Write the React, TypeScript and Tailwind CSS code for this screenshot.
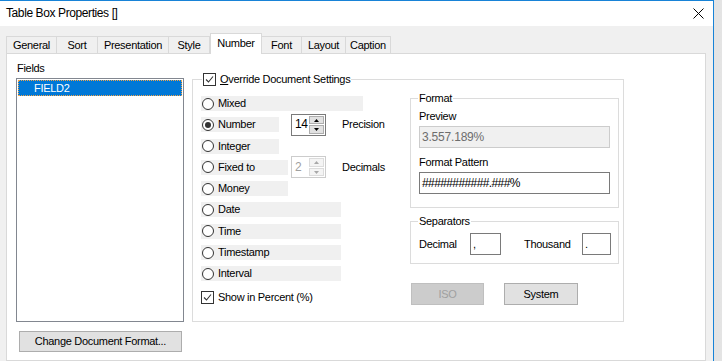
import React from "react";

const TABS = [
  { label: "General", w: "w-[51px]" },
  { label: "Sort", w: "w-[41px]" },
  { label: "Presentation", w: "w-[71px]" },
  { label: "Style", w: "w-[41px]" },
  { label: "Number", w: "w-[52px]", active: true },
  { label: "Font", w: "w-[40px]" },
  { label: "Layout", w: "w-[44px]" },
  { label: "Caption", w: "w-[45px]" },
];

function Radio({ checked }: { checked?: boolean }) {
  return (
    <span className="ml-[1px] w-[12px] h-[12px] rounded-full border border-[#333] bg-white flex items-center justify-center shrink-0">
      {checked && <span className="w-[6px] h-[6px] rounded-full bg-[#333]" />}
    </span>
  );
}

function Check() {
  return (
    <span className="w-[13px] h-[13px] border border-[#333] bg-white shrink-0 flex items-center justify-center">
      <svg width="11" height="11" viewBox="0 0 11 11">
        <path d="M2 5.5 L4.5 8 L9 2.5" fill="none" stroke="#333" strokeWidth="1.1" />
      </svg>
    </span>
  );
}

function Tri({ up, color }: { up?: boolean; color: string }) {
  return (
    <svg width="5" height="3" viewBox="0 0 5 3">
      <path d={up ? "M0 3 L2.5 0 L5 3Z" : "M0 0 L2.5 3 L5 0Z"} fill={color} />
    </svg>
  );
}

function Spin({ value, disabled }: { value: string; disabled?: boolean }) {
  const arrow = disabled ? "#a8a8a8" : "#000";
  return (
    <div
      className={`w-[35px] h-[22px] border bg-white flex items-stretch ${
        disabled ? "border-[#cccccc] text-[#a0a0a0]" : "border-[#7a7a7a] text-black"
      }`}
    >
      <span className="flex-1 pl-[3px] flex items-center text-[12px]">{value}</span>
      <div className="w-[16px] flex flex-col gap-[1px] py-[1px] pr-[1px]">
        <div
          className={`flex-1 border flex items-center justify-center ${
            disabled ? "border-[#dcdcdc] bg-[#f4f4f4]" : "border-[#adadad] bg-[#e1e1e1]"
          }`}
        >
          <Tri up color={arrow} />
        </div>
        <div
          className={`flex-1 border flex items-center justify-center ${
            disabled ? "border-[#dcdcdc] bg-[#f4f4f4]" : "border-[#adadad] bg-[#e1e1e1]"
          }`}
        >
          <Tri color={arrow} />
        </div>
      </div>
    </div>
  );
}

function RadioRow({
  label,
  w,
  checked,
  children,
}: {
  label: string;
  w: string;
  checked?: boolean;
  children?: React.ReactNode;
}) {
  return (
    <div className="h-[15px] flex items-center">
      <div className={`h-[15px] ${w} bg-[#f0f0f0] flex items-center shrink-0`}>
        <Radio checked={checked} />
        <span className="ml-[4px] whitespace-nowrap">{label}</span>
      </div>
      {children}
    </div>
  );
}

export default function App() {
  return (
    <div className="w-[722px] h-[361px] overflow-hidden bg-[linear-gradient(to_right,#c6c6c6,#e4e4e4)] font-['Liberation_Sans',Arial,sans-serif] text-[11px] tracking-[-0.3px] text-black leading-[13px]">
      <div className="w-[714px] h-[361px] border-t border-r border-[#1883d7] bg-[#f0f0f0] flex flex-col">
        {/* Title bar */}
        <div className="h-[25px] bg-white flex items-center justify-between pl-[6px] pr-[9px] shrink-0">
          <span className="text-[12px] tracking-[-0.4px]">Table Box Properties []</span>
          <svg width="11" height="11" viewBox="0 0 11 11">
            <path d="M0.5 0.5 L10.5 10.5 M10.5 0.5 L0.5 10.5" stroke="#000" strokeWidth="1" />
          </svg>
        </div>

        {/* Tabs */}
        <div className="px-[6px] pt-[7px] flex-1 flex flex-col">
          <div className="h-[20px] flex items-end relative z-10">
            {TABS.map((t, i) =>
              t.active ? (
                <div
                  key={t.label}
                  className={`${t.w} h-[21px] -mb-[1px] bg-white border border-b-0 border-[#d9d9d9] flex items-center justify-center pb-[2px]`}
                >
                  {t.label}
                </div>
              ) : (
                <div
                  key={t.label}
                  className={`${t.w} h-[17px] border-t border-r border-[#d9d9d9] ${
                    i === 0 ? "border-l" : ""
                  } flex items-center justify-center`}
                >
                  {t.label}
                </div>
              )
            )}
          </div>

          {/* Tab page */}
          <div className="w-[700px] flex-1 bg-white border border-[#d9d9d9] flex pl-[9px]">
            {/* Fields column */}
            <div className="w-[168px] pt-[8px] flex flex-col">
              <span className="ml-[1px]">Fields</span>
              <div className="mt-[3px] h-[244px] border border-[#828790] bg-white p-[1px]">
                <div className="h-[16px] bg-[#0078d7] border border-dotted border-[#f3a54a] text-white pl-[15px] flex items-center">
                  FIELD2
                </div>
              </div>
              <button className="mt-[9px] ml-[3px] w-[163px] h-[21px] bg-[#e1e1e1] border border-[#adadad] flex items-center justify-center">
                Change Document Format...
              </button>
            </div>

            {/* Override group */}
            <div className="ml-[8px] mt-[25px] w-[432px] h-[243px] border border-[#dcdcdc] relative flex">
              <div className="absolute -top-[7px] left-[9px] bg-white px-[1px] flex items-center gap-[4px]">
                <Check />
                <span>
                  <span className="underline">O</span>verride Document Settings
                </span>
              </div>

              {/* Radio list */}
              <div className="w-[217px] pl-[8px] pt-[16px] flex flex-col gap-[6.3px]">
                <RadioRow label="Mixed" w="w-[162px]" />
                <RadioRow label="Number" w="w-[78px]" checked>
                  <div className="ml-[12px]">
                    <Spin value="14" />
                  </div>
                  <span className="ml-[16px]">Precision</span>
                </RadioRow>
                <RadioRow label="Integer" w="w-[78px]" />
                <RadioRow label="Fixed to" w="w-[87px]">
                  <div className="ml-[3px]">
                    <Spin value="2" disabled />
                  </div>
                  <span className="ml-[16px]">Decimals</span>
                </RadioRow>
                <RadioRow label="Money" w="w-[87px]" />
                <RadioRow label="Date" w="w-[140px]" />
                <RadioRow label="Time" w="w-[140px]" />
                <RadioRow label="Timestamp" w="w-[140px]" />
                <RadioRow label="Interval" w="w-[140px]" />
                <div className="mt-[3px] flex items-center gap-[4px]">
                  <Check />
                  <span>Show in Percent (%)</span>
                </div>
              </div>

              {/* Right column */}
              <div className="w-[209px] pt-[18px] flex flex-col">
                <div className="h-[110px] border border-[#dcdcdc] relative pl-[8px] pt-[11px] flex flex-col">
                  <span className="absolute -top-[7px] left-[7px] bg-white px-[1px]">Format</span>
                  <span>Preview</span>
                  <div className="mt-[3px] w-[191px] h-[22px] bg-[#f0f0f0] border border-[#cccccc] text-[#6d6d6d] pl-[2px] flex items-center text-[12px] tracking-[-0.2px]">
                    3.557.189%
                  </div>
                  <span className="mt-[8px]">Format Pattern</span>
                  <div className="mt-[3px] w-[191px] h-[22px] bg-white border border-[#7a7a7a] pl-[2px] flex items-center text-[12px] tracking-[-0.6px]">
                    ###########.###%
                  </div>
                </div>

                <div className="mt-[13px] h-[43px] border border-[#dcdcdc] relative pl-[8px] pt-[11px] flex items-start">
                  <span className="absolute -top-[7px] left-[7px] bg-white px-[1px]">Separators</span>
                  <div className="h-[22px] flex items-center">
                    <span className="w-[51px]">Decimal</span>
                    <div className="w-[31px] h-[22px] border border-[#7a7a7a] pl-[2px] flex items-center">,</div>
                    <span className="ml-[23px] w-[58px]">Thousand</span>
                    <div className="w-[29px] h-[22px] border border-[#7a7a7a] pl-[2px] flex items-center">.</div>
                  </div>
                </div>

                <div className="mt-[19px] flex items-center">
                  <button className="ml-[1px] w-[73px] h-[22px] bg-[#cccccc] border border-[#bfbfbf] text-[#a0a0a0] flex items-center justify-center">
                    ISO
                  </button>
                  <button className="ml-[20px] w-[74px] h-[22px] bg-[#e1e1e1] border border-[#adadad] flex items-center justify-center">
                    System
                  </button>
                </div>
              </div>
            </div>
          </div>
        </div>
      </div>
    </div>
  );
}
